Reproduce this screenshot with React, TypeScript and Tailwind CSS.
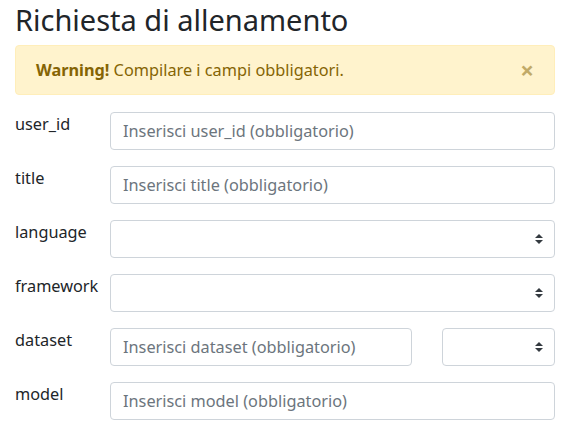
import { useState } from "react";

function SelectArrows() {
  return (
    <svg
      width="8"
      height="10"
      viewBox="0 0 4 5"
      className="pointer-events-none absolute right-3 top-1/2 -translate-y-1/2"
    >
      <path fill="#343a40" d="M2 0L0 2h4zm0 5L0 3h4z" />
    </svg>
  );
}

const inputCls =
  "block w-full h-[38px] rounded border border-[#ced4da] bg-white px-3 text-[16.3px] leading-6 text-[#495057] placeholder:text-[#6c757d] outline-none";

function Row({ label, children }: { label: string; children: React.ReactNode }) {
  return (
    <div className="flex mb-4">
      <label className="w-[95px] shrink-0 leading-6 text-[16.3px] text-[#212529]">{label}</label>
      <div className="flex-1">{children}</div>
    </div>
  );
}

function Select() {
  return (
    <div className="relative">
      <select className={inputCls + " appearance-none pr-8"} defaultValue="">
        <option value=""></option>
      </select>
      <SelectArrows />
    </div>
  );
}

export default function App() {
  const [showAlert, setShowAlert] = useState(true);

  return (
    <div
      className="ml-[15px] w-[540px] text-[#212529]"
      style={{ fontFamily: '"Noto Sans", sans-serif' }}
    >
      <h3 className="mt-[3px] mb-2 text-[29px] leading-[34px] font-normal">Richiesta di allenamento</h3>

      {showAlert && (
        <div className="relative mb-[17px] rounded border border-[#ffeeba] bg-[#fff3cd] px-5 py-3 text-[16.3px] leading-6 text-[#856404]">
          <strong className="font-bold">Warning!</strong> Compilare i campi obbligatori.
          <button
            type="button"
            onClick={() => setShowAlert(false)}
            className="absolute right-0 top-0 px-5 py-3 text-2xl font-bold leading-6 text-[#856404] opacity-50"
          >
            ×
          </button>
        </div>
      )}

      <Row label="user_id">
        <input className={inputCls} placeholder="Inserisci user_id (obbligatorio)" />
      </Row>
      <Row label="title">
        <input className={inputCls} placeholder="Inserisci title (obbligatorio)" />
      </Row>
      <Row label="language">
        <Select />
      </Row>
      <Row label="framework">
        <Select />
      </Row>
      <Row label="dataset">
        <div className="flex gap-[30px]">
          <div className="w-[302px]">
            <input className={inputCls} placeholder="Inserisci dataset (obbligatorio)" />
          </div>
          <div className="w-[113px]">
            <Select />
          </div>
        </div>
      </Row>
      <Row label="model">
        <input className={inputCls} placeholder="Inserisci model (obbligatorio)" />
      </Row>
    </div>
  );
}
